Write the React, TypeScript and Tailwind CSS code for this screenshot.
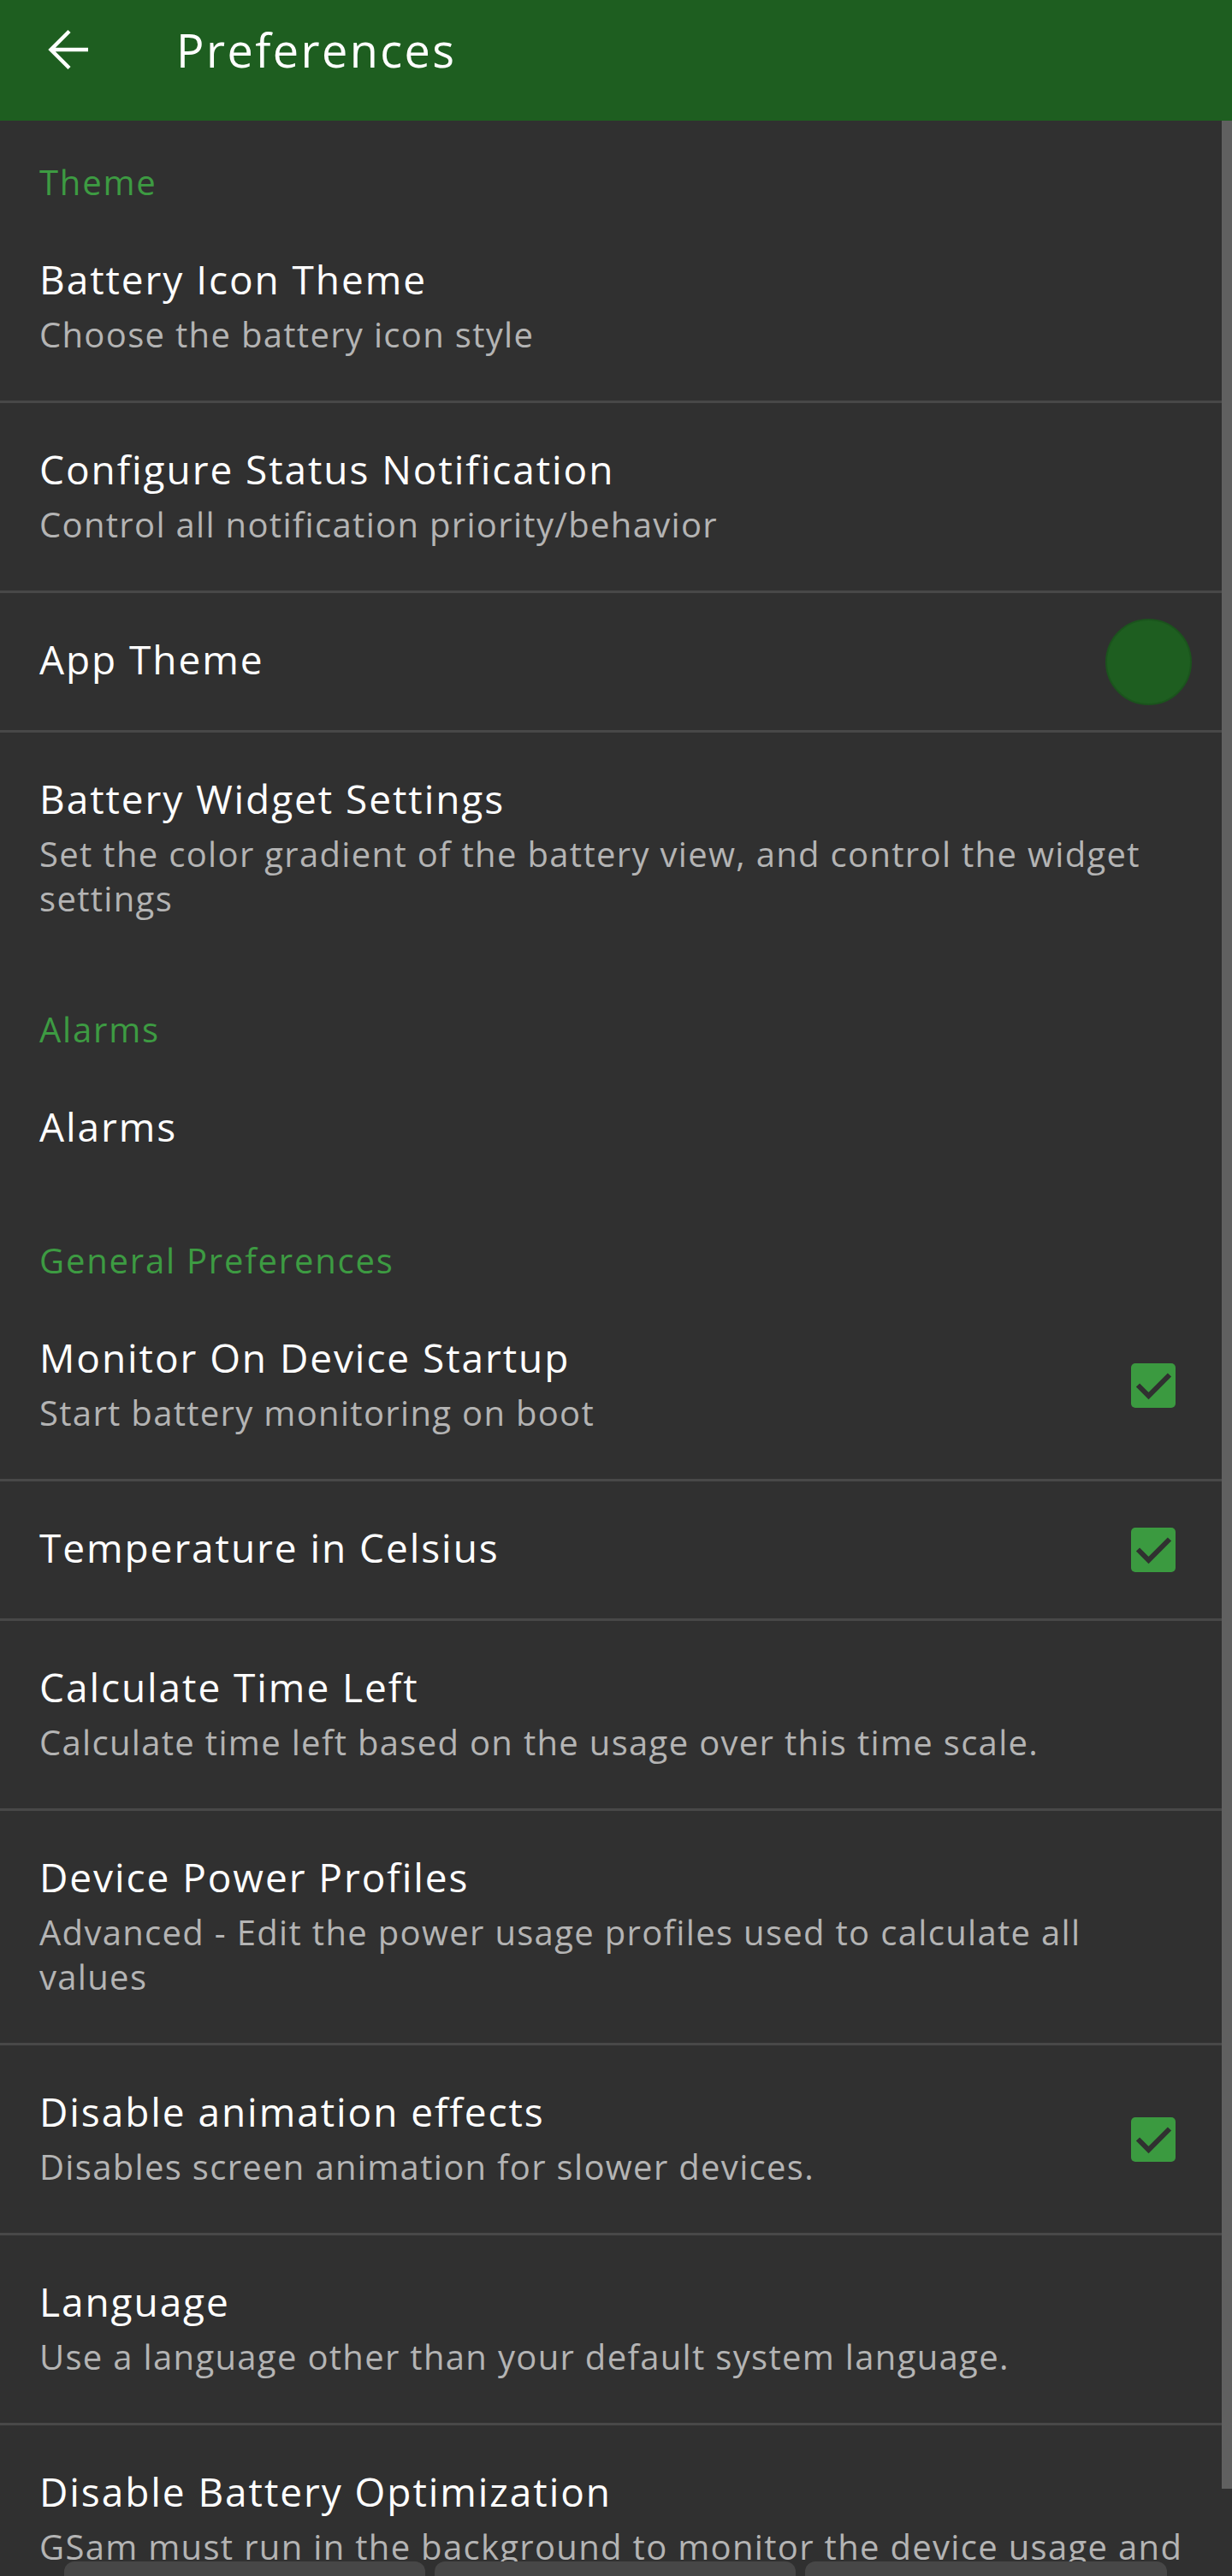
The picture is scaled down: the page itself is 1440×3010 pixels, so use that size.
import React from 'react';

type Pref = {
  title: string;
  summary?: string;
  widget?: 'check' | 'circle';
  divider?: boolean;
};

function CheckBox() {
  return (
    <svg width="52" height="52" viewBox="0 0 52 52" aria-hidden>
      <rect x="0" y="0" width="52" height="52" rx="5" fill="#3b9a40" />
      <path d="M8 25.5 L20.5 38 L45 13.5" fill="none" stroke="#303030" strokeWidth="6" />
    </svg>
  );
}

function Category({ label, pt }: { label: string; pt: string }) {
  return (
    <div className={`pl-[46px] pb-[10px] text-[40px] leading-[52px] tracking-[0.045em] text-[#3d9b42] ${pt}`}>
      {label}
    </div>
  );
}

function PrefRow({ title, summary, widget, divider = true }: Pref) {
  return (
    <div className={`flex items-center ${divider ? 'border-b-[3px] border-[#484848]' : ''}`}>
      <div className={`min-w-0 flex-1 pl-[46px] pr-[46px] pt-[47px] ${summary ? 'pb-[51px]' : 'pb-[53px]'}`}>
        <div className="text-[46px] leading-[60px] tracking-[0.042em] text-white">{title}</div>
        {summary && (
          <div className="mt-[9px] text-[40px] leading-[52px] tracking-[0.033em] text-[#b4b4b4]">{summary}</div>
        )}
      </div>
      {widget === 'check' && (
        <div className="shrink-0 pr-[66px]">
          <CheckBox />
        </div>
      )}
      {widget === 'circle' && (
        <div className="shrink-0 pr-[47px]">
          <div className="h-[101px] w-[101px] rounded-full border-2 border-[#1b531d] bg-[#1e5e20]" />
        </div>
      )}
    </div>
  );
}

export default function App() {
  return (
    <div className="relative h-[3010px] overflow-hidden bg-[#303030] font-['Open_Sans',sans-serif]">
      <header className="h-[141px] bg-[#1e5e20]">
        <div className="flex h-[116px] items-center">
          <svg width="50" height="50" viewBox="0 0 50 50" className="ml-[56px]" aria-hidden>
            <path d="M47 25 H4 M25 3.5 L3.5 25 L25 46.5" fill="none" stroke="#ffffff" strokeWidth="4.5" />
          </svg>
          <h1 className="ml-[100px] text-[54px] leading-none tracking-[0.045em] text-white">Preferences</h1>
        </div>
      </header>

      <main>
        <Category label="Theme" pt="pt-[46px]" />
        <PrefRow title="Battery Icon Theme" summary="Choose the battery icon style" />
        <PrefRow title="Configure Status Notification" summary="Control all notification priority/behavior" />
        <PrefRow title="App Theme" widget="circle" />
        <PrefRow
          title="Battery Widget Settings"
          summary="Set the color gradient of the battery view, and control the widget settings"
          divider={false}
        />

        <Category label="Alarms" pt="pt-[50px]" />
        <PrefRow title="Alarms" divider={false} />

        <Category label="General Preferences" pt="pt-[48px]" />
        <PrefRow title="Monitor On Device Startup" summary="Start battery monitoring on boot" widget="check" />
        <PrefRow title="Temperature in Celsius" widget="check" />
        <PrefRow title="Calculate Time Left" summary="Calculate time left based on the usage over this time scale." />
        <PrefRow
          title="Device Power Profiles"
          summary="Advanced - Edit the power usage profiles used to calculate all values"
        />
        <PrefRow
          title="Disable animation effects"
          summary="Disables screen animation for slower devices."
          widget="check"
        />
        <PrefRow title="Language" summary="Use a language other than your default system language." />
        <PrefRow
          title="Disable Battery Optimization"
          summary="GSam must run in the background to monitor the device usage and provide accurate battery statistics."
          divider={false}
        />
      </main>

      {/* scroll thumb */}
      <div className="absolute right-0 top-[141px] h-[2767px] w-[12px] bg-[#606060]" />

      {/* bottom tab pills, cut off by the screen edge */}
      <div className="absolute left-[75px] top-[2993px] flex gap-[11px]">
        <div className="h-[30px] w-[422px] rounded-[12px] bg-[#474747]" />
        <div className="h-[30px] w-[422px] rounded-[12px] bg-[#474747]" />
        <div className="h-[30px] w-[423px] rounded-[12px] bg-[#474747]" />
      </div>
    </div>
  );
}
